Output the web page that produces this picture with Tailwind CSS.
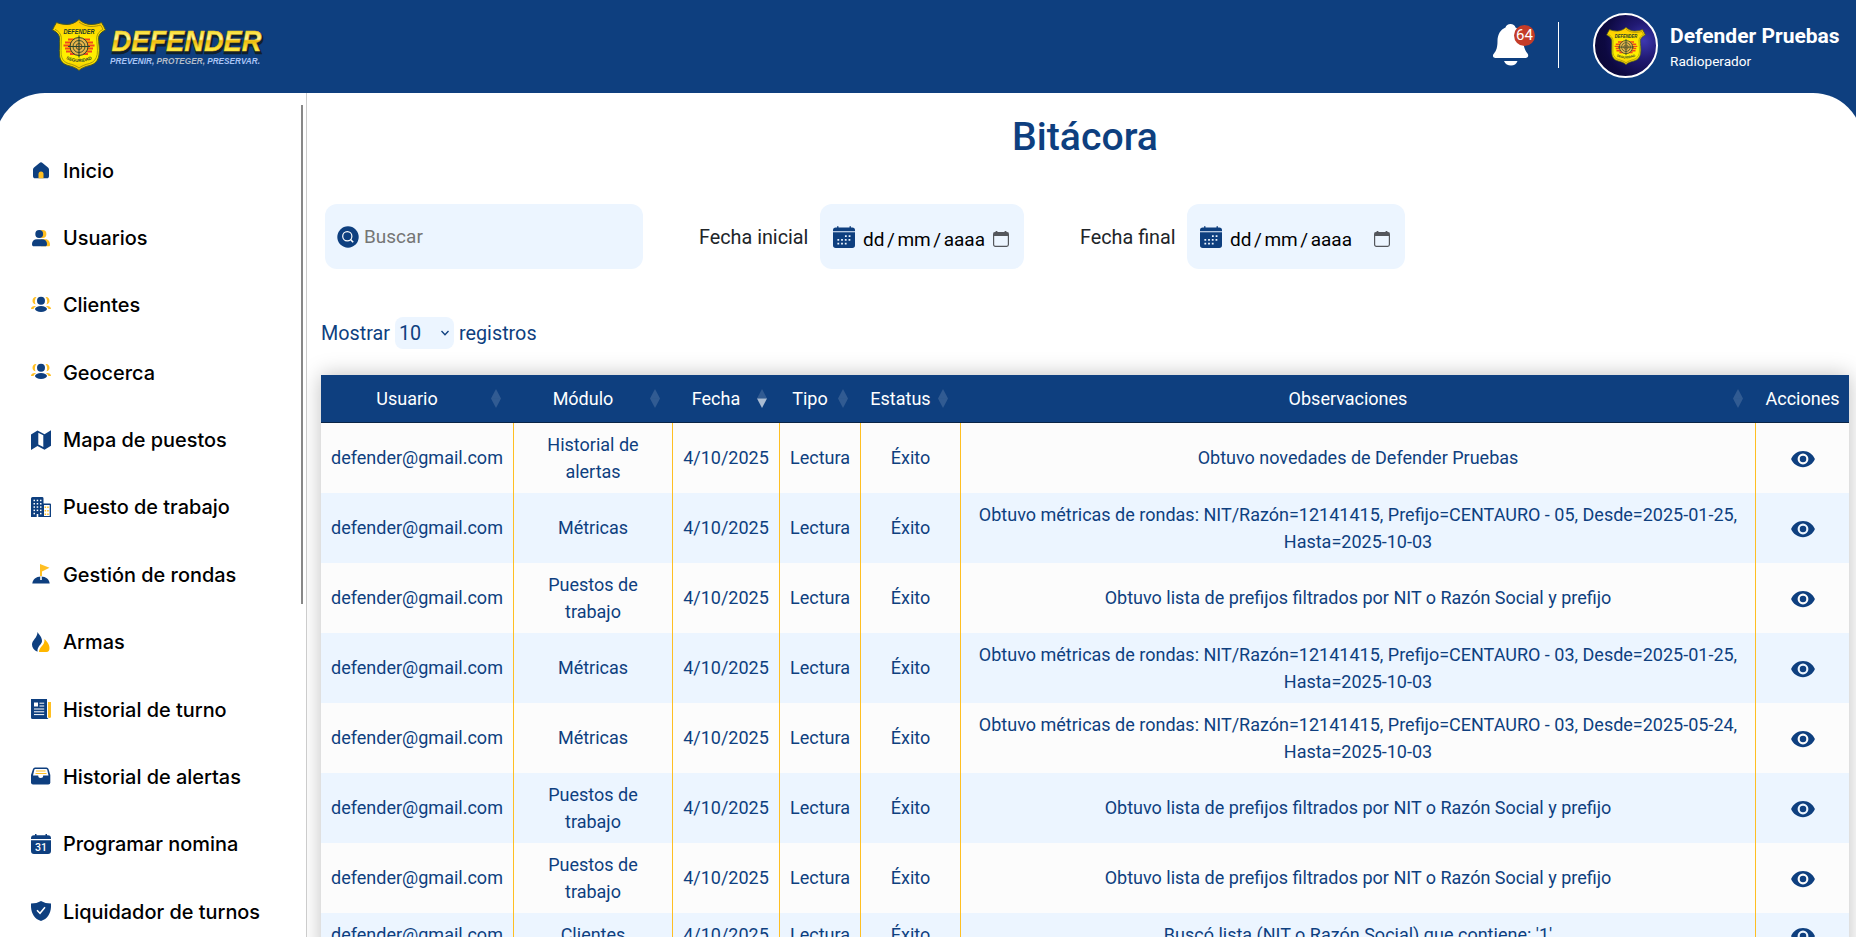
<!DOCTYPE html>
<html lang="es">
<head>
<meta charset="utf-8">
<title>Bitácora</title>
<script src="https://cdn.jsdelivr.net/npm/@tailwindcss/browser@4"></script>
</head>
<body class="h-[937px] w-[1856px] overflow-hidden bg-[#0e3f7f] font-['Roboto',sans-serif] text-[#212529]">
<svg class="absolute h-0 w-0">
  <defs>
    <linearGradient id="gold" x1="0" y1="0" x2="0" y2="1"><stop offset="0" stop-color="#ffc400"/><stop offset=".4" stop-color="#ffee00"/><stop offset=".75" stop-color="#fff000"/><stop offset="1" stop-color="#f5c400"/></linearGradient>
  </defs>
  <symbol id="shield" viewBox="0 0 54 52">
    <path d="M27 .5C30 3.500 35 5.500 39 5.500C43 5.500 47 4.500 49.500 3.500C51 6 52.500 8.500 53.500 11C50 12.500 47 15 46.500 18.500C46.500 24 48 30 47 36C46 42 43 45 38 46.500C33 47.500 29 49.500 27 51.500C25 49.500 21 47.500 16 46.500C11 45 8 42 7.500 36C7 30 8 24 7.500 18.500C7 15 4 12.500.5 11C1.500 8.500 3 6 4.500 3.500C7 4.500 11 5.500 15 5.500C19 5.500 24 3.500 27 .5Z" fill="url(#gold)" stroke="#4a5a20" stroke-width="1"/>
    <path d="M27 3C30 5.500 35 7.500 39 7.500C43 7.500 46 6.800 48.500 6C49.500 7.500 50.500 9 51 10.300C47.500 12 45 15 44.700 18.500C44.700 24 46 30 45.200 35.500C44 40.500 42 43 37.500 44.500C33 45.500 29 47.300 27 49C25 47.300 21 45.500 16.500 44.500C12 43 10 40.500 9.200 35.500C8.700 30 9.500 24 9.300 18.500C9 15 6.500 12 3 10.300" fill="none" stroke="#6b6a10" stroke-width=".6"/>
    <path d="M16 20.500h22M13 23.500h28M11.500 26.500h31M13 29.500h28M14 32.500h26M18 35h18" stroke="#f04a1c" stroke-width="2"/>
    <circle cx="27" cy="27.500" r="9" fill="#e8b54a" stroke="#27452c" stroke-width="1"/>
    <circle cx="27" cy="27.500" r="6" fill="none" stroke="#27452c" stroke-width=".9"/>
    <circle cx="27" cy="27.500" r="3" fill="#f0a040" stroke="#27452c" stroke-width=".8"/>
    <path d="M27 16.500v22M16 27.500h22" stroke="#27452c" stroke-width="1.100"/>
    <text x="27" y="14.500" text-anchor="middle" textLength="31" lengthAdjust="spacingAndGlyphs" font-family="Liberation Sans" font-weight="700" font-style="italic" font-size="6.500" fill="#1d3a2a">DEFENDER</text>
    <path id="arc" d="M13 39.500Q27 46.500 41 39.500" fill="none"/>
    <text font-family="Liberation Sans" font-weight="700" font-size="4.500" fill="#1d3a2a"><textPath href="#arc" startOffset="50%" text-anchor="middle">SEGURIDAD</textPath></text>
  </symbol>
  <symbol id="cal" viewBox="0 0 16 16">
    <path fill="#0e3f7f" d="M4 .5a.5.5 0 0 0-1 0V1H2a2 2 0 0 0-2 2v.8h16V3a2 2 0 0 0-2-2h-1V.5a.5.5 0 0 0-1 0V1H4zM0 4.600h16V14a2 2 0 0 1-2 2H2a2 2 0 0 1-2-2Z"/>
    <path stroke="#ecf5ff" stroke-width="1.300" stroke-dasharray="1.300 1.400" d="M8.700 7.300h4.100M3.200 10.100h9.500M3.200 12.800h7"/>
  </symbol>
  <symbol id="pick" viewBox="0 0 16 16">
    <path d="M3.500 0v2M12.500 0v2" stroke="#54575c" stroke-width="1.800"/>
    <rect x=".6" y="1.600" width="14.800" height="13.800" rx="1.800" fill="none" stroke="#54575c" stroke-width="1.200"/>
    <path d="M.6 1.500h14.800v3.500H.6z" fill="#54575c"/>
  </symbol>
  <symbol id="eye" viewBox="0 4.500 24 15"><path fill="#0e3f7f" d="M12 9a3 3 0 0 0-3 3 3 3 0 0 0 3 3 3 3 0 0 0 3-3 3 3 0 0 0-3-3m0 8a5 5 0 0 1-5-5 5 5 0 0 1 5-5 5 5 0 0 1 5 5 5 5 0 0 1-5 5m0-12.500C7 4.500 2.730 7.610 1 12c1.730 4.390 6 7.500 11 7.500s9.270-3.110 11-7.500c-1.730-4.390-6-7.500-11-7.500"/></symbol>
</svg>

<header class="flex h-[93px] items-start justify-between pl-[52px] text-white">
  <div class="flex items-start gap-[4px] pt-[19px]">
    <svg class="h-[52px] w-[54px]"><use href="#shield"/></svg>
    <svg class="mt-[6px] h-[42px] w-[158px]" viewBox="0 0 158 42">
      <defs><linearGradient id="word" x1="0" y1="0" x2="0" y2="1"><stop offset=".1" stop-color="#f5d400"/><stop offset=".45" stop-color="#fff6a0"/><stop offset=".5" stop-color="#edb80a"/><stop offset=".8" stop-color="#fff04a"/></linearGradient></defs>
      <g font-family="Liberation Sans" font-style="italic" font-weight="700">
        <text x="2.500" y="27.500" font-size="30" textLength="150" lengthAdjust="spacingAndGlyphs" fill="#10202c" stroke="#10202c" stroke-width="2.500">DEFENDER</text>
        <text x="1.500" y="26.300" font-size="30" textLength="150" lengthAdjust="spacingAndGlyphs" fill="url(#word)" stroke="#edc51d" stroke-width=".5">DEFENDER</text>
        <text x="0" y="38.500" font-size="9.500" textLength="150" lengthAdjust="spacingAndGlyphs" fill="#a9c4f5">PREVENIR, <tspan fill="#b3bcc8">PROTEGER,</tspan> PRESERVAR.</text>
      </g>
    </svg>
  </div>
  <div class="flex h-[91px] items-center">
    <div class="relative -mt-px h-[42px] w-[42px]">
      <svg class="h-[42px] w-[36px]" viewBox="0 0 36 42"><path fill="#fff" d="M17.500 0C20 0 22 1.300 22.500 3.500C28 5.500 30.500 10.500 30.500 17C30.500 23 32 26.500 34.500 29.500C36 31.500 35 34 32.500 34H2.500C0 34-1 31.500 1 29.500C3.500 26.500 4.500 23 4.500 17C4.500 10.500 7.500 5.500 12.500 3.500C13 1.300 15 0 17.500 0ZM11 37h13.500C23.500 40 21 41.500 18 41.500S12 40 11 37Z"/></svg>
      <span class="absolute top-[1px] left-[21px] flex size-[21px] items-center justify-center rounded-full bg-[#c43c28] text-[15px]">64</span>
    </div>
    <div class="-mt-px ml-[23px] h-[46px] w-px bg-white"></div>
    <div class="ml-[34px] flex size-[65px] items-center justify-center rounded-full border-2 border-white bg-[radial-gradient(circle_at_80%_42%,#3d38b0_0%,#211a73_30%,#0d0941_65%,#09062f_100%)]">
      <svg class="h-[38px] w-[40px]"><use href="#shield"/></svg>
    </div>
    <div class="ml-[12px] w-[186px] pt-[4px] whitespace-nowrap">
      <div class="text-[21px] leading-[27px] font-bold">Defender Pruebas</div>
      <div class="text-[13.600px] leading-[22px]">Radioperador</div>
    </div>
  </div>
</header>

<div class="-ml-[5px] flex h-[844px] w-[1868px] rounded-t-[50px] bg-white">
  <nav class="flex h-full w-[312px] shrink-0 justify-between border-r border-[#ccc] pl-[36px]">
    <ul id="menu" class="pt-[44px]"></ul>
    <div class="mt-[12px] mr-[3px] h-[499px] w-[2px] bg-[#888]"></div>
  </nav>
  <main class="h-full w-[1549px] overflow-hidden pl-[14px]">
    <h1 class="w-[1528px] pt-[20px] text-center text-[39.200px] leading-[48px] font-medium text-[#0e3f7f]">Bitácora</h1>
    <div class="mt-[43px] flex h-[65px] items-center pl-[4px] text-[19.800px]">
      <div class="flex h-full w-[318px] items-center gap-[5px] rounded-xl bg-[#ecf5ff] pl-[12px]">
        <svg class="size-[22px]" viewBox="0 0 22 22"><circle cx="11" cy="11" r="10.700" fill="#0e3f7f"/><circle cx="10.300" cy="10.300" r="4.600" fill="none" stroke="#fff" stroke-width="1.200"/><path d="M13.500 13.500l2.700 2.700" stroke="#fff" stroke-width="1.600"/></svg>
        <span class="mt-px text-[19px] text-[#757575]">Buscar</span>
      </div>
      <span class="mt-[2px] ml-[56px] w-[109px] whitespace-nowrap">Fecha inicial</span>
      <div class="ml-[12px] flex h-full w-[204px] items-center rounded-xl bg-[#ecf5ff] pl-[13px] text-black">
        <svg class="size-[22px]"><use href="#cal"/></svg>
        <span class="mt-[7px] ml-[8px] flex w-[122px] justify-between text-[19px]"><span>dd</span><span>/</span><span>mm</span><span>/</span><span>aaaa</span></span>
        <svg class="mt-[4px] ml-[8px] size-[16px]"><use href="#pick"/></svg>
      </div>
      <span class="mt-[2px] ml-[56px] w-[95px] whitespace-nowrap">Fecha final</span>
      <div class="ml-[12px] flex h-full w-[218px] items-center rounded-xl bg-[#ecf5ff] pl-[13px] text-black">
        <svg class="size-[22px]"><use href="#cal"/></svg>
        <span class="mt-[7px] ml-[8px] flex w-[122px] justify-between text-[19px]"><span>dd</span><span>/</span><span>mm</span><span>/</span><span>aaaa</span></span>
        <svg class="mt-[4px] ml-[22px] size-[16px]"><use href="#pick"/></svg>
      </div>
    </div>
    <div class="mt-[48px] flex h-[32px] items-center text-[19.800px] text-[#0e3f7f]">
      <span class="mt-[2px] w-[74px]">Mostrar</span>
      <span class="flex h-full w-[59px] items-center justify-between rounded-lg bg-[#ecf5ff] pr-[5px] pl-[4px]"><span class="mt-[2px]">10</span><svg class="size-[8px]" viewBox="0 0 8 8"><path d="M.5 2L4 5.800 7.500 2" fill="none" stroke="#0e3f7f" stroke-width="1.300"/></svg></span>
      <span class="mt-[2px] ml-[5px]">registros</span>
    </div>
    <table class="mt-[26px] w-[1528px] table-fixed border-separate border-spacing-0 text-center text-[18px] leading-[27px] text-[#0e3f7f] shadow-[0_0_20px_rgba(0,0,0,0.25)]">
      <colgroup><col class="w-[193px]"><col class="w-[159px]"><col class="w-[107px]"><col class="w-[81px]"><col class="w-[100px]"><col class="w-[795px]"><col class="w-[93px]"></colgroup>
      <thead><tr id="head" class="h-[48px] bg-[#0e3f7f] text-white"></tr></thead>
      <tbody id="rows"></tbody>
    </table>
  </main>
</div>
<script>
const B = '#0e3f7f', Y = '#ffbf22';
const people = `<path fill="${Y}" d="M5 2C2.500 2 1.500 4 1.500 6S3 9 4.500 9.200C3.500 7.500 3.500 4 5.500 2ZM15 2c2.500 0 3.500 2 3.500 4s-1.500 3-3 3.200C16.500 7.500 16.500 4 14.500 2ZM4 11C1.500 11 0 12 0 14h2.500c.5-1 1-2 2.500-2.800ZM16 11c2.500 0 4 1 4 3h-2.500c-.5-1-1-2-2.500-2.800Z"/><ellipse cx="10" cy="5.800" rx="4" ry="4" fill="${B}"/><ellipse cx="10" cy="14" rx="6" ry="2.900" fill="${B}"/>`;
const dots = (xs, ys, c) => xs.map(x => ys.map(y => `<rect x="${x}" y="${y}" width="1.500" height="1.500" fill="${c}"/>`).join('')).join('');
const items = [
  ['Inicio', `<path fill="${B}" d="M10 2.300c.6 0 1 .2 1.500.6l5.500 4.600c.7.600 1 1.300 1 2V16c0 1.500-.8 2.300-2.200 2.300H4.200C2.800 18.300 2 17.500 2 16V9.500c0-.7.3-1.400 1-2l5.500-4.600c.5-.4.900-.6 1.500-.6Z"/><path fill="${Y}" d="M7.500 18.300V14a2.500 2.500 0 0 1 5 0v4.300Z"/>`],
  ['Usuarios', `<circle cx="11.500" cy="6" r="3.900" fill="${Y}"/><path fill="${Y}" d="M10 18.300v-7h4.500c3 0 4.500 2.500 4.500 5.500 0 1-.5 1.500-1.500 1.500Z"/><circle cx="8.200" cy="6" r="3.900" fill="${B}"/><path fill="${B}" d="M1 16c0-3 2-4.700 5-4.700h5c3 0 5 1.700 5 4.700 0 1.500-.5 2.300-2 2.300H3c-1.500 0-2-.8-2-2.300Z"/>`],
  ['Clientes', people],
  ['Geocerca', people],
  ['Mapa de puestos', `<path fill="${B}" d="M0 4.500L6.500.5 13.500 4.200 20 .2V15.800l-6.500 4L6.500 16 0 20Z"/><path fill="#fff" d="M7.300 2.800l5 2.500v11.800l-5-2.600Z"/>`],
  ['Puesto de trabajo', `<path fill="${B}" d="M1.500 0h10Q12.500 0 12.500 1.500V6.500H19Q20 6.500 20 7.500V20H0V1.500Q0 0 1.500 0Z"/><path fill="#fff" d="M13 8h5.700v11H13ZM5.700 17h1.600v3H5.700Z"/>${dots([2.500,5.700,9],[2.700,6,9.300,12.600],'#fff')}${dots([2.500,9],[15.800],'#fff')}${dots([13.600,16.200],[9.500,13,16.500],Y)}`],
  ['Gestión de rondas', `<path fill="${Y}" d="M9 0l9.500 3.800L11 7.500v6H9Z"/><path fill="${B}" d="M1.300 19.500c.5-4 3.500-7 8.700-7s8.200 3 8.700 7Z"/><path fill="#cdd5e0" d="M9 12h2v4H9Z"/>`],
  ['Armas', `<path fill="${B}" d="M6.500 0c2 3.500 4.500 5 4.500 9 0 3.500-5 5-4.500 10.800C3 18.500 1 15.500 1 12.500 1 8 6.500 6 6.500 0Z"/><path fill="#ffb700" d="M13.500 7c2 2 5 5 5 9 0 2.500-1 4-3 4H8c0-5.500 6-6 5.500-13Z"/>`],
  ['Historial de turno', `<path fill="${B}" d="M0 0h16v18.500l1.500 1.500H1.500Q0 20 0 18.500Z"/><path fill="${Y}" d="M17 3h3v14.500q0 1.500-1.500 1.500T17 17.500Z"/><path fill="#fff" d="M3 3.500h4v4H3Z"/><path stroke="#fff" stroke-width="1" d="M8.500 4.200h4.700M8.500 7h4.700M3 10h10.200M3 12.800h10.200M3 15.600h10.200"/>`],
  ['Historial de alertas', `<path fill="${B}" d="M4 1.500h11.500q1.500 0 2 1.500L19.300 9v7.500q0 2-2 2H2q-2 0-2-2V9L2 3q.5-1.500 2-1.500Z"/><path fill="#fff" d="M4.200 3h11q.8 0 1 .8L17.500 9.500h-5.300q0 2.500-2.500 2.500T7.200 9.500H2L3.300 3.800q.2-.8.9-.8Z"/><path stroke="${Y}" stroke-width="1.200" d="M5 5h9.500M4.500 7.500h11"/>`],
  ['Programar nomina', `<path fill="${B}" d="M3 1.200h1V0h1.500v1.200h9V0H16v1.200h1q3 0 3 3V5H0v-.8q0-3 3-3ZM0 6.200h20V17q0 3-3 3H3q-3 0-3-3Z"/><text x="10" y="16.600" text-anchor="middle" font-family="Roboto" font-weight="500" font-size="10.500" fill="#fff">31</text>`],
  ['Liquidador de turnos', `<path fill="${B}" d="M10 0c3 1.700 6 2.500 10 2.500C20.500 11 17.500 17.500 10 20 2.500 17.500-.5 11 0 2.500 4 2.500 7 1.700 10 0Z"/><path d="M6 9.300l3 3 5-6" fill="none" stroke="#fff" stroke-width="1.500"/>`],
];
document.getElementById('menu').innerHTML = items.map(([t, i]) =>
  `<li class="flex h-[67.360px] items-center gap-[12px] font-['Inter',sans-serif] text-[19.900px] leading-[30px] font-[450] whitespace-nowrap text-black"><svg class="-mt-px size-[20px]" viewBox="0 0 20 20">${i}</svg><span>${t}</span></li>`).join('');

const heads = ['Usuario', 'Módulo', 'Fecha', 'Tipo', 'Estatus', 'Observaciones', 'Acciones'];
document.getElementById('head').innerHTML = heads.map((h, i) => i == 6
  ? `<th class="border-b border-[#0a2547] p-0 font-normal">${h}</th>`
  : `<th class="relative border-b border-[#0a2547] p-0 pr-[21px] font-normal">${h}<svg class="absolute top-[14px] right-[12.600px] h-[20px] w-[10px]" viewBox="0 0 10 20"><path d="M5 0L10 9.500H0Z" fill="#fff" fill-opacity=".15"/><path d="M0 9.500h10L5 19Z" fill="#fff" fill-opacity="${i == 2 ? '.65' : '.15'}"/></svg></th>`).join('');

const list = 'Obtuvo lista de prefijos filtrados por NIT o Razón Social y prefijo';
const met = (p, d) => `Obtuvo métricas de rondas: NIT/Razón=12141415, Prefijo=CENTAURO - ${p}, Desde=${d},<br>Hasta=2025-10-03`;
const data = [
  ['Historial de<br>alertas', 'Obtuvo novedades de Defender Pruebas'],
  ['Métricas', met('05', '2025-01-25')],
  ['Puestos de<br>trabajo', list],
  ['Métricas', met('03', '2025-01-25')],
  ['Métricas', met('03', '2025-05-24')],
  ['Puestos de<br>trabajo', list],
  ['Puestos de<br>trabajo', list],
  ['Clientes', "Buscó lista (NIT o Razón Social) que contiene: '1'"],
];
const cell = (c, tall) => tall && !c.includes('<br>')
  ? `<td class="border-r border-[#ffbf22] px-0 pt-[7px] pb-[9px]">${c}</td>`
  : `<td class="border-r border-[#ffbf22] px-0 py-[8px]">${c}</td>`;
document.getElementById('rows').innerHTML = data.map(([m, o]) => {
  const tall = (m + o).includes('<br>');
  return `<tr class="bg-[#fcfcfc] even:bg-[#ecf5ff]">${['defender@gmail.com', m, '4/10/2025', 'Lectura', 'Éxito', o].map(c => cell(c, tall)).join('')}<td class="p-0"><svg class="mx-auto mt-[2px] h-[18px] w-[26px]"><use href="#eye"/></svg></td></tr>`;
}).join('');
</script>
</body>
</html>
